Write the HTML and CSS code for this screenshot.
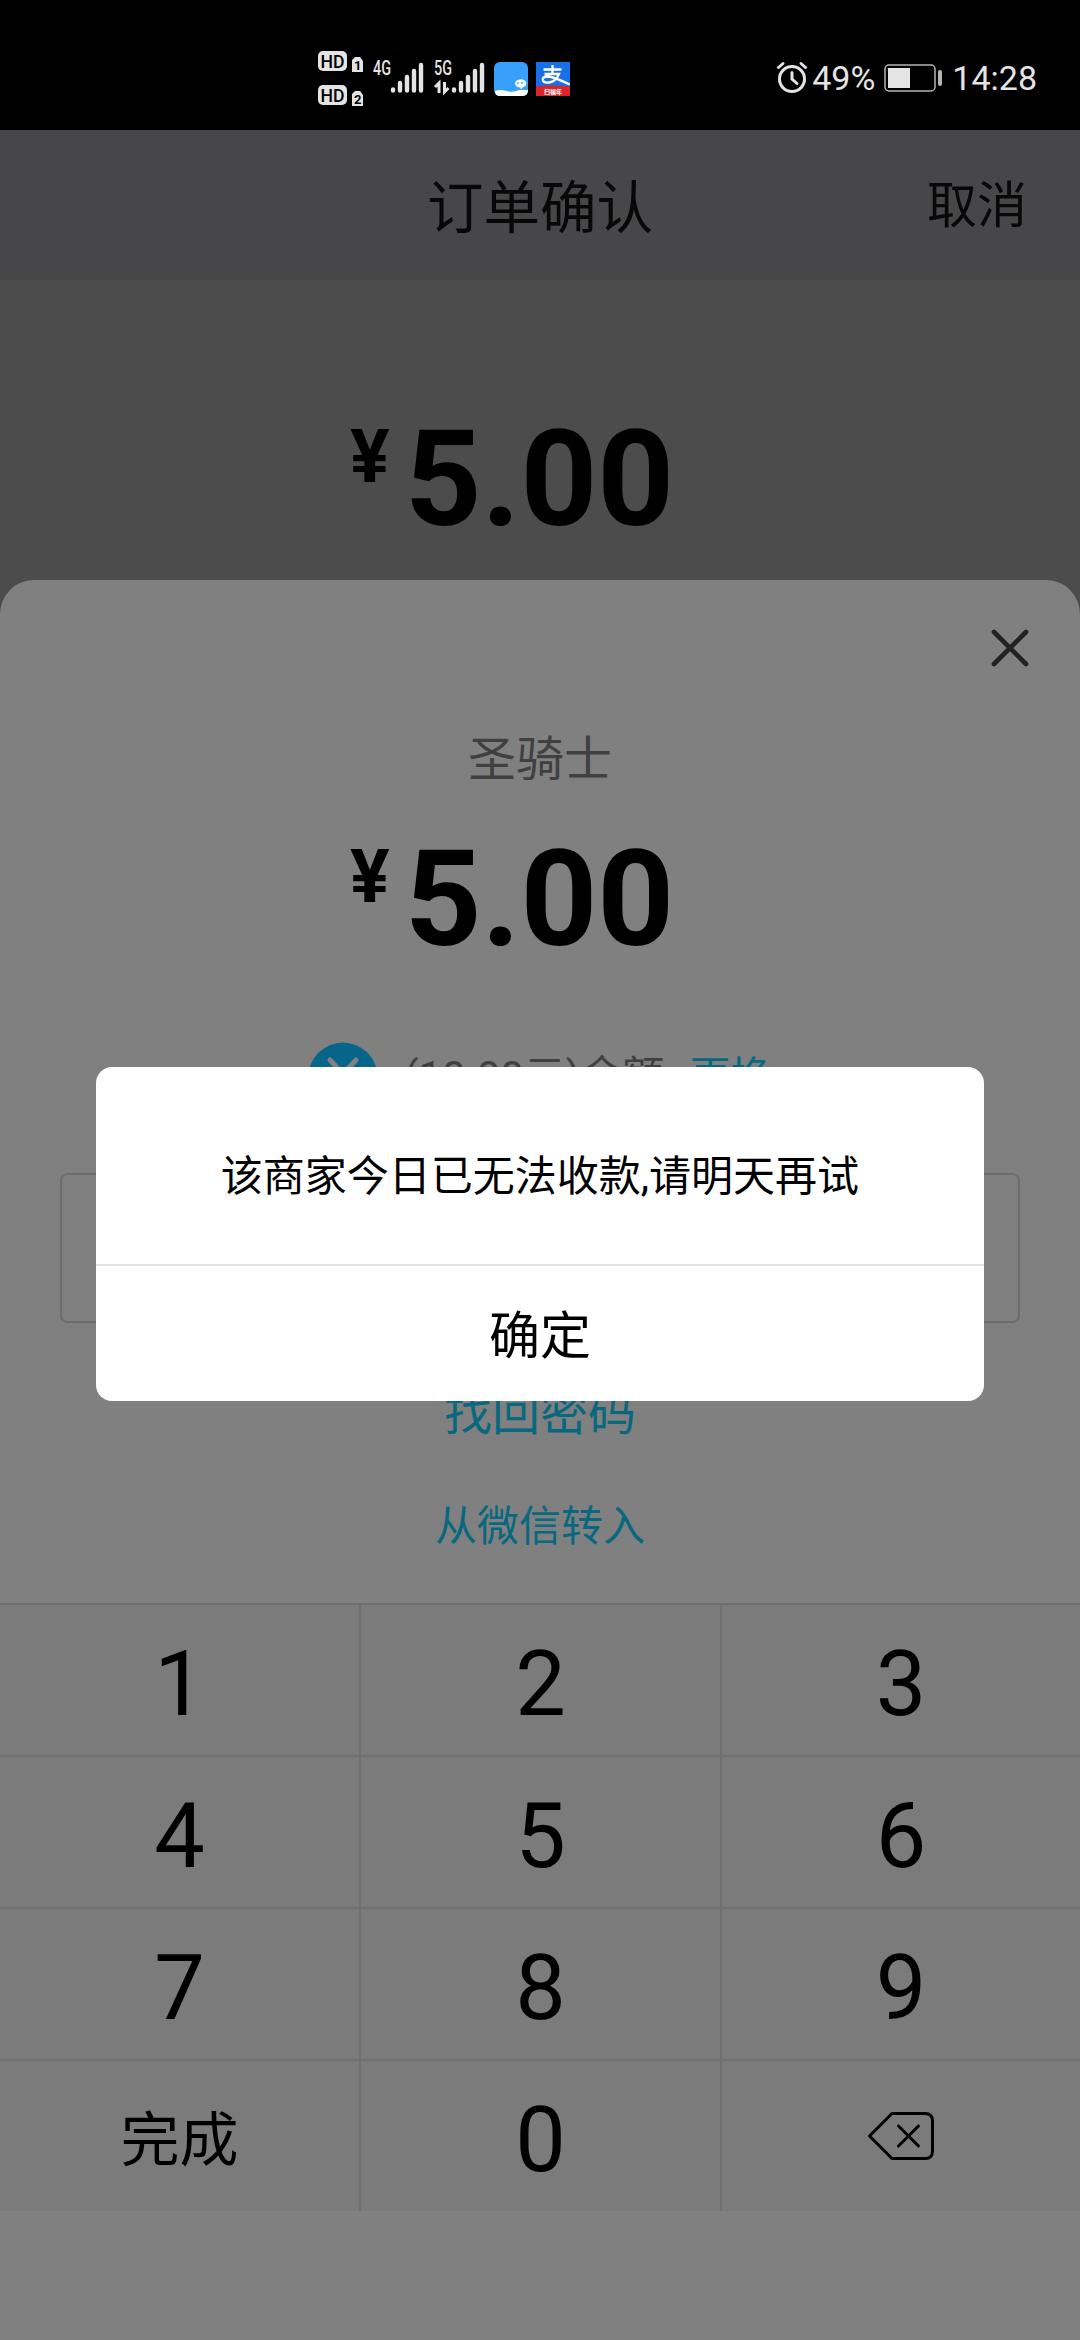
FILE: index.html
```html
<!DOCTYPE html>
<html lang="zh-CN">
<head>
<meta charset="utf-8">
<title>订单确认</title>
<link rel="stylesheet" href="styles.css">
</head>
<body>
<div class="screen">
  <div class="status">
    <svg class="signals" width="262" height="60" viewBox="0 0 262 60">
      <g fill="#e4e4e4">
        <rect x="0" y="3" width="29" height="20" rx="5"/>
        <rect x="0" y="37" width="29" height="20" rx="5"/>
        <path d="M37 9h5l3 4v11H34V12zM37 43h5l3 4v11H34V46z"/>
        <text class="net" x="55" y="27" textLength="18" lengthAdjust="spacingAndGlyphs">4G</text>
        <text class="net" x="116" y="27" textLength="18" lengthAdjust="spacingAndGlyphs">5G</text>
      </g>
      <text class="hd" x="2.5" y="19.5" textLength="24" lengthAdjust="spacingAndGlyphs">HD</text>
      <text class="hd" x="2.5" y="53.5" textLength="24" lengthAdjust="spacingAndGlyphs">HD</text>
      <text class="sim" x="36" y="22">1</text>
      <text class="sim" x="36" y="56">2</text>
      <g stroke="#e4e4e4" stroke-width="4.4" stroke-linecap="round">
        <path d="M75 41.500v1M82 35v7.500M89 29v13.500M96 23v19.500M103 17v25.500"/>
        <path d="M136 41.500v1M143 35v7.500M150 29v13.500M157 23v19.500M164 17v25.500"/>
      </g>
      <path d="M117 39l4-4v10M126.500 34v10l4-4" fill="none" stroke="#e4e4e4" stroke-width="3"/>
      <rect x="176" y="14" width="34" height="34" rx="6" fill="#37a0fb"/>
      <path d="M177 43q6-2 12 0t12-1l9 0q0 6-6 6h-22q-5 0-5-5z" fill="#fff"/>
      <path d="M202 31.500a5 4 0 1 0 0 8l1 2 1.500-2a5 4 0 0 0-2.500-8z" fill="#fff"/>
      <circle cx="200" cy="35" r=".9" fill="#37a0fb"/><circle cx="204" cy="35" r=".9" fill="#37a0fb"/>
      <rect x="218" y="14" width="34" height="34" fill="#1b6fe6"/>
      <path d="M218 38.500q17-2 34 0v9.500h-34z" fill="#d9242b"/>
      <path d="M225.500 21.500h18M234.500 17v8.500M226.500 26h14.500q-3 7.500-10 8.500-6 .5-6.300-2.800 0-3.200 5-3.200 6 .3 22 8" fill="none" stroke="#fff" stroke-width="2.300"/>
      <text class="tag" x="226" y="45.500">扫福年</text>
    </svg>
    <div class="status-right">
      <svg width="32" height="34" viewBox="0 0 32 34" fill="none" stroke="#e4e4e4" stroke-linecap="round">
        <circle cx="16" cy="18" r="12.500" stroke-width="3"/>
        <path d="M16 11.500v6.500l5 4.500" stroke-width="3"/>
        <path d="M2.500 6.500l4.500-4M29.500 6.500l-4.500-4" stroke-width="3"/>
      </svg>
      <span class="percent">49%</span>
      <svg class="battery" width="58" height="28" viewBox="0 0 58 28">
        <rect x="1" y="1" width="50" height="26" rx="4" fill="none" stroke="#b5b5b5" stroke-width="1.500"/>
        <rect x="4" y="4" width="22" height="20" fill="#e4e4e4"/>
        <rect x="54" y="6" width="4" height="16" rx="2" fill="#b5b5b5"/>
      </svg>
      <span class="clock">14:28</span>
    </div>
  </div>

  <header class="nav">
    <span></span>
    <h1 class="title">订单确认</h1>
    <span class="cancel">取消</span>
  </header>

  <div class="order-amount">
    <div class="amount"><span class="yen">¥</span><span>5.00</span></div>
  </div>

  <section class="sheet">
    <div class="close-row">
      <svg width="40" height="40" viewBox="0 0 40 40" stroke="#222" stroke-width="4.600" stroke-linecap="round"><path d="M4 4l32 32M36 4L4 36"/></svg>
    </div>
    <div class="merchant">圣骑士</div>
    <div class="amount"><span class="yen">¥</span><span>5.00</span></div>
    <div class="method">
      <svg width="68" height="70" viewBox="0 0 68 70"><circle cx="34" cy="35" r="34.500" fill="#07648a"/><path d="M21 18l13 14 13-14M34 32v22M23 36h22M23 45h22" fill="none" stroke="#808080" stroke-width="5" stroke-linecap="round"/></svg>
      <span class="balance">(10.00元)余额</span>
      <span class="change">更换</span>
    </div>
    <div class="password"></div>
    <div class="recover">找回密码</div>
    <div class="transfer">从微信转入</div>
    <div class="keypad">
      <div class="key">1</div><div class="key">2</div><div class="key">3</div>
      <div class="key">4</div><div class="key">5</div><div class="key">6</div>
      <div class="key">7</div><div class="key">8</div><div class="key">9</div>
      <div class="key done">完成</div><div class="key">0</div>
      <div class="key erase">
        <svg width="68" height="50" viewBox="0 0 68 50" fill="none" stroke="#000" stroke-width="3" stroke-linecap="round" stroke-linejoin="round"><path d="M25 2.500h33q7.500 0 7.500 7.500v30q0 7.500-7.500 7.500H25L2.500 25z"/><path d="M31.500 15l20 20M51.500 15l-20 20"/></svg>
      </div>
    </div>
  </section>

  <div class="dialog">
    <p class="message">该商家今日已无法收款,请明天再试</p>
    <div class="confirm">确定</div>
  </div>
</div>
</body>
</html>
```
FILE: styles.css
```css
* { box-sizing: border-box; }

body {
  margin: 0;
  background: #4c4c4c;
  font-family: Roboto, "Noto Sans CJK SC", sans-serif;
  color: #000;
}

.screen {
  position: relative;
  width: 1080px;
  height: 2340px;
  overflow: hidden;
  display: flex;
  flex-direction: column;
}

/* status bar */
.status {
  height: 130px;
  flex: none;
  background: #000;
  display: flex;
  justify-content: space-between;
  align-items: flex-start;
  padding: 48px 43px 0 318px;
  color: #e4e4e4;
}
.signals { display: block; }
.net { font: 500 20px Roboto, sans-serif; }
.hd { font: 500 19px Roboto, sans-serif; fill: #000; }
.sim { font: 700 13px Roboto, sans-serif; fill: #000; }
.tag { font: 700 6px "Noto Sans CJK SC", sans-serif; fill: #fff; }
.status-right {
  display: flex;
  align-items: center;
  height: 60px;
  font-size: 34px;
  line-height: 62px;
}
.percent { margin-left: 4px; }
.battery { margin: 0 10px 0 9px; }

/* navigation */
.nav {
  height: 150px;
  flex: none;
  background: #474749;
  display: grid;
  grid-template-columns: 1fr auto 1fr;
  padding: 0 53px;
  color: #080808;
}
.title {
  margin: 0;
  font-size: 56.5px;
  font-weight: 400;
  line-height: 159px;
}
.cancel {
  justify-self: end;
  font-size: 50px;
  line-height: 153px;
}

/* amounts */
.order-amount {
  height: 300px;
  flex: none;
  padding-top: 120px;
}
.amount {
  display: flex;
  align-items: flex-start;
  height: 156px;
  padding-left: 350px;
  gap: 15px;
  font-size: 134px;
  font-weight: 700;
  line-height: 159px;
}
.yen {
  font-size: 74px;
  line-height: 114px;
}

/* payment sheet */
.sheet {
  flex: 1;
  background: #808080;
  border-radius: 34px 34px 0 0;
  display: flex;
  flex-direction: column;
}
.close-row {
  display: flex;
  justify-content: flex-end;
  padding: 48px 50px 0 0;
  height: 140px;
}
.merchant {
  height: 80px;
  margin-bottom: 20px;
  font-size: 48px;
  line-height: 80px;
  text-align: center;
  color: #404040;
}
.method {
  display: flex;
  align-items: center;
  height: 70px;
  margin-top: 66px;
  padding-left: 309px;
  font-size: 42px;
  line-height: 76px;
  color: #404040;
}
.balance { margin-left: 27px; }
.change { margin-left: 25px; font-size: 41px; color: #07687f; }
.password {
  height: 150px;
  margin: 61px 60px 0;
  border: 2px solid #6c6c6c;
  border-radius: 7px;
}
.recover, .transfer {
  text-align: center;
  color: #07687f;
}
.recover {
  margin-top: 56px;
  font-size: 48px;
  line-height: 70px;
}
.transfer {
  margin-top: 43px;
  font-size: 42px;
  line-height: 70px;
}

/* keypad */
.keypad {
  margin-top: 41px;
  display: grid;
  grid-template-columns: 361px 361px 358px;
  grid-auto-rows: 152px;
}
.key {
  background: #7b7b7b;
  border-top: 2px solid #707070;
  border-right: 2px solid #707070;
  font-size: 90px;
  line-height: 159px;
  text-align: center;
}
.key:nth-child(3n) { border-right: 0; }
.done { font-size: 59px; }
.erase {
  display: flex;
  align-items: center;
  justify-content: center;
}

/* alert dialog */
.dialog {
  position: absolute;
  left: 96px;
  top: 1067px;
  width: 888px;
  height: 334px;
  border-radius: 16px;
  background: #fff;
  text-align: center;
}
.message {
  margin: 0;
  height: 199px;
  border-bottom: 2px solid #e3e3e3;
  font-size: 42px;
  line-height: 220px;
}
.confirm {
  font-size: 51px;
  line-height: 142px;
}
```
